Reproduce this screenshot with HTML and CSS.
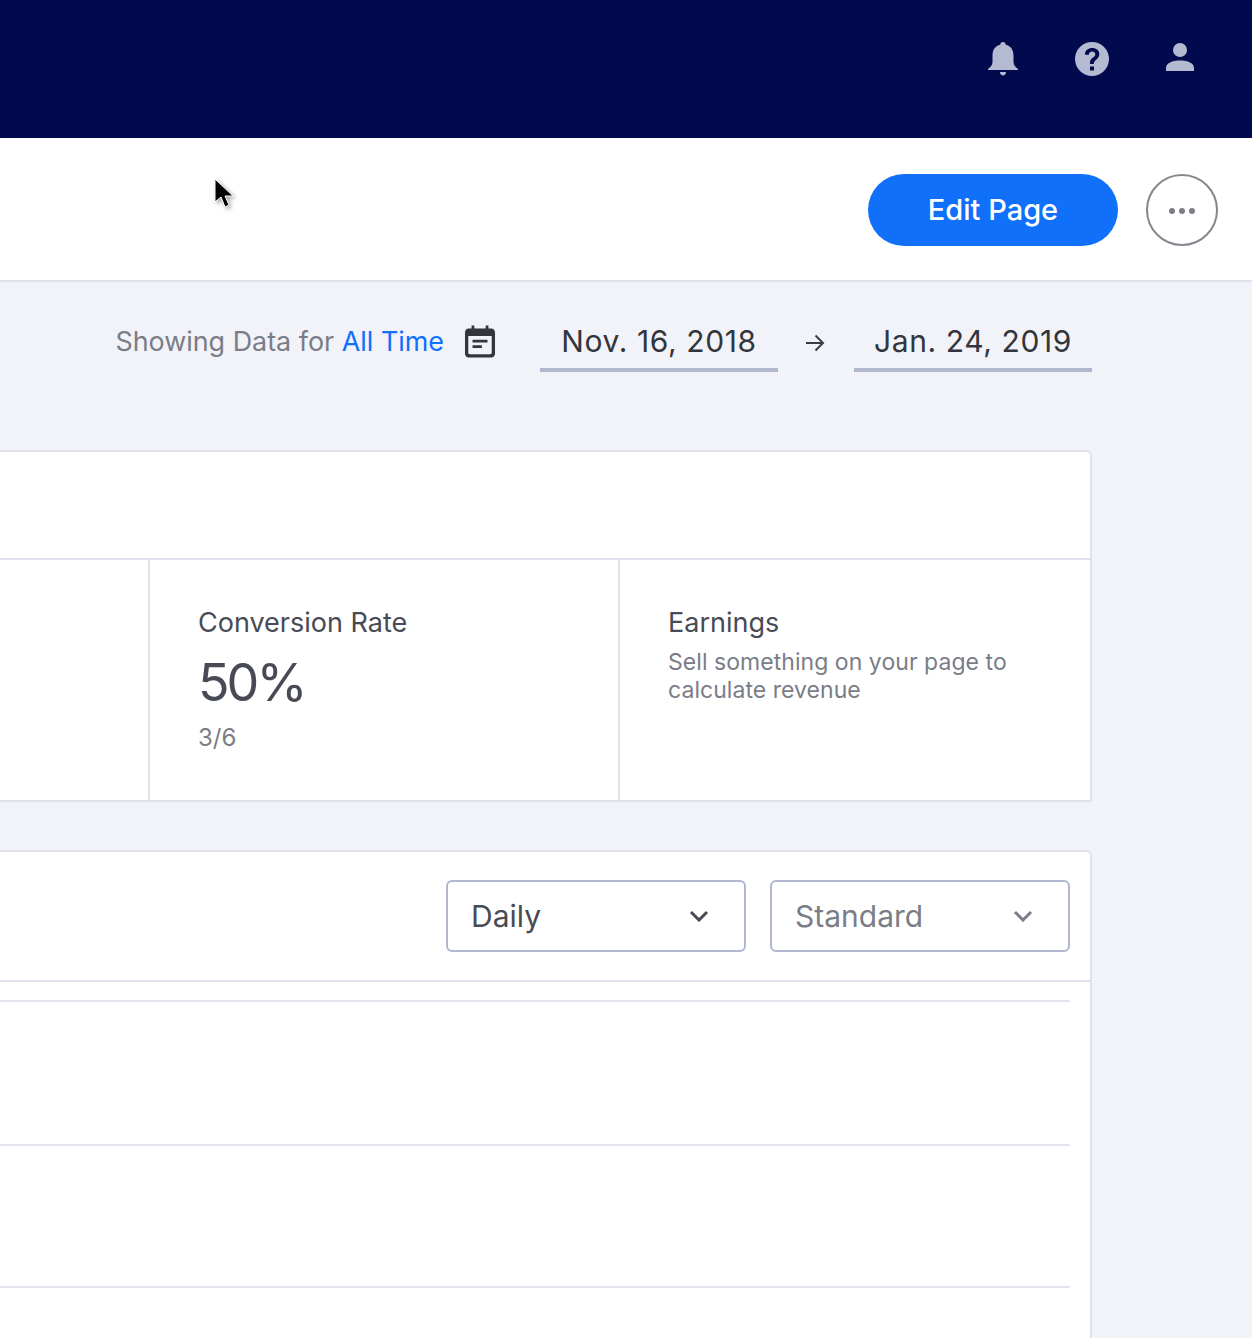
FILE: index.html
```html
<!DOCTYPE html>
<html lang="en">
<head>
    <meta charset="UTF-8">
    <title>Page Analytics</title>
    <link rel="stylesheet" href="styles.css">
</head>
<body>
    <!-- top nav -->
    <div class="topbar">
        <svg class="nav-icon bell" viewBox="0 0 30 34"><path d="M15 0c1.600 0 2.600 1 2.800 2.800C23 4 25.500 8 25.500 13.500v6.500c0 3 2 5 4.500 7v1H0v-1c2.500-2 4.500-4 4.500-7v-6.500C4.500 8 7 4 12.200 2.800 12.400 1 13.400 0 15 0z"/><path d="M12 30h6c0 2-1.300 3.500-3 3.500S12 32 12 30z"/></svg>
        <svg class="nav-icon help" viewBox="0 0 34 34"><path fill-rule="evenodd" d="M17 0a17 17 0 1 1 0 34a17 17 0 0 1 0-34zM15 24.500v4h4v-4zM17.200 6c-4 0-7 2.400-7.400 6.400l3.800.5c.3-2.200 1.600-3.500 3.500-3.500 1.900 0 3.200 1.100 3.200 2.800 0 1.500-.8 2.300-2.300 3.400-2.400 1.700-3.100 3-3 6.400h3.800c0-2 .4-2.800 2.200-4.100 2.200-1.600 3.300-3.200 3.300-5.800C24.300 8.400 21.400 6 17.200 6z"/></svg>
        <svg class="nav-icon user" viewBox="0 0 28 28"><circle cx="14" cy="7" r="7"/><path d="M0 28v-3c0-5 6-7.500 14-7.500S28 20 28 25v3z"/></svg>
    </div>

    <div class="page-header">
        <button class="btn-edit">Edit Page</button>
        <button class="btn-more"><span></span><span></span><span></span></button>
    </div>

    <div class="content">
        <div class="date-row">
            <div class="date-label">Showing Data for <a class="date-link">All Time</a></div>
            <svg class="cal-icon" viewBox="0 0 32 34"><path fill-rule="evenodd" d="M7 0h3v3h12V0h3v3h3c2.200 0 4 1.800 4 4v23c0 2.200-1.800 4-4 4H4c-2.200 0-4-1.800-4-4V7c0-2.200 1.800-4 4-4h3zM3.500 11v18c0 1 .5 1.500 1.500 1.500h22c1 0 1.500-.5 1.500-1.500V11zM8 15h16v3H8zM8 21h10v3H8z"/></svg>
            <div class="date-input">Nov. 16, 2018</div>
            <svg class="arrow-icon" viewBox="0 0 20 18"><path d="M1 9h17M10.500 1.500L18 9l-7.500 7.500" fill="none" stroke="#3a3c46" stroke-width="2"/></svg>
            <div class="date-input">Jan. 24, 2019</div>
        </div>

        <div class="card stats-card">
            <div class="card-top"></div>
            <div class="stats">
                <div class="stat stat-cut"></div>
                <div class="stat">
                    <div class="stat-title">Conversion Rate</div>
                    <div class="stat-number">50%</div>
                    <div class="stat-sub">3/6</div>
                </div>
                <div class="stat">
                    <div class="stat-title">Earnings</div>
                    <div class="stat-note">Sell something on your page to calculate revenue</div>
                </div>
            </div>
        </div>

        <div class="card chart-card">
            <div class="chart-head">
                <div class="select">
                    <span>Daily</span>
                    <svg class="chevron" viewBox="0 0 20 12"><path d="M2 2l8 8 8-8" fill="none" stroke="currentColor" stroke-width="3"/></svg>
                </div>
                <div class="select select-muted">
                    <span>Standard</span>
                    <svg class="chevron" viewBox="0 0 20 12"><path d="M2 2l8 8 8-8" fill="none" stroke="currentColor" stroke-width="3"/></svg>
                </div>
            </div>
            <div class="chart-body">
                <div class="grid-line"></div>
                <div class="grid-line"></div>
                <div class="grid-line"></div>
            </div>
        </div>
    </div>

    <svg class="cursor" viewBox="0 0 20 32"><path d="M1 1v23l6-5 4 10 4-2-4-9h8z" fill="#000" stroke="#fff" stroke-width="1"/></svg>
</body>
</html>
```
FILE: styles.css
```css
* {
    margin: 0;
    padding: 0;
    box-sizing: border-box;
}

html, body {
    height: 1338px;
    overflow: hidden;
}

body {
    font-family: 'Inter', 'Noto Sans', sans-serif;
    background: #f1f3f8;
    position: relative;
}

.topbar {
    height: 138px;
    background: #000a4d;
    display: flex;
    align-items: flex-start;
    justify-content: flex-end;
    padding-right: 58px;
}

.nav-icon {
    fill: #b3bad1;
    display: block;
}

.bell {
    width: 30px;
    height: 34px;
    margin-top: 42px;
    margin-right: 57px;
}

.help {
    width: 34px;
    height: 34px;
    margin-top: 42px;
    margin-right: 57px;
}

.user {
    width: 28px;
    height: 28px;
    margin-top: 43px;
}

.page-header {
    height: 144px;
    background: #fff;
    border-bottom: 2px solid #dfe1ec;
    display: flex;
    align-items: flex-start;
    justify-content: flex-end;
    gap: 28px;
    padding: 36px 34px 0 0;
}

.btn-edit {
    width: 250px;
    height: 72px;
    border: none;
    border-radius: 36px;
    background: #1070fa;
    color: #fff;
    font-family: inherit;
    font-size: 29px;
    font-weight: 500;
    padding-bottom: 2px;
}

.btn-more {
    width: 72px;
    height: 72px;
    border: 2px solid #85878f;
    border-radius: 50%;
    background: #fff;
    display: flex;
    align-items: center;
    justify-content: center;
    gap: 4px;
    padding-top: 2px;
}

.btn-more span {
    width: 6px;
    height: 6px;
    border-radius: 50%;
    background: #7c7e88;
}

.content {
    width: 1092px;
}

.date-row {
    height: 168px;
    display: flex;
    align-items: flex-start;
    justify-content: flex-end;
    padding-top: 40px;
}

.date-label {
    font-size: 26.9px;
    line-height: 38px;
    color: #7a7d87;
}

.date-link {
    color: #1070fa;
}

.cal-icon {
    width: 30px;
    height: 33px;
    margin: 3px 45px 0 21px;
    fill: #33353d;
}

.date-input {
    width: 238px;
    height: 50px;
    border-bottom: 4px solid #b0b7cf;
    font-size: 30px;
    letter-spacing: 0.6px;
    line-height: 38px;
    color: #33353d;
    text-align: center;
}

.arrow-icon {
    width: 20px;
    height: 18px;
    margin: 12px 29px 0 27px;
}

.card {
    background: #fff;
    border: 2px solid #dfe1ec;
    border-left: none;
    border-radius: 0 6px 0 0;
}

.stats-card {
    height: 352px;
}

.card-top {
    height: 108px;
    border-bottom: 2px solid #dfe1ec;
}

.stats {
    display: grid;
    grid-template-columns: 150px 470px 1fr;
    height: 240px;
}

.stat {
    padding: 45px 30px 0 48px;
    border-right: 2px solid #dfe1ec;
}

.stat:last-child {
    border-right: none;
}

.stat-title {
    font-size: 27px;
    line-height: 36px;
    color: #484a55;
}

.stat-number {
    font-size: 52px;
    letter-spacing: -3px;
    line-height: 62px;
    margin-top: 11px;
    color: #484a55;
}

.stat-sub {
    font-size: 24px;
    line-height: 30px;
    margin-top: 9px;
    color: #7a7d87;
}

.stat-note {
    font-size: 23px;
    letter-spacing: 0.05px;
    line-height: 28px;
    margin-top: 7px;
    color: #7a7d87;
}

.chart-card {
    margin-top: 48px;
    height: 500px;
}

.chart-head {
    height: 130px;
    border-bottom: 2px solid #dfe1ec;
    display: flex;
    justify-content: flex-end;
    gap: 24px;
    padding: 28px 20px 0 0;
}

.select {
    width: 300px;
    height: 72px;
    border: 2px solid #b0b7cf;
    border-radius: 6px;
    background: #fff;
    display: flex;
    align-items: center;
    justify-content: space-between;
    padding: 0 35px 0 23px;
    font-size: 30px;
    color: #484a55;
}

.select-muted {
    color: #7a7d87;
}

.chevron {
    width: 20px;
    height: 12px;
}

.chart-body {
    padding: 18px 20px 0 0;
}

.grid-line {
    height: 2px;
    background: #e1e5ee;
    margin-bottom: 142px;
}

.grid-line:nth-child(2) {
    margin-bottom: 140px;
}

.cursor {
    position: absolute;
    left: 214px;
    top: 178px;
    width: 20px;
    height: 32px;
    filter: drop-shadow(2px 2px 2px rgba(0, 0, 0, 0.35));
}
```
